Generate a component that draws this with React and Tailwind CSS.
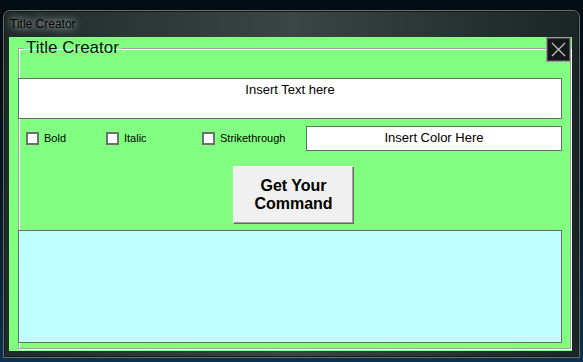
import React from 'react';

const Check = ({ label, className = '' }) => (
  <label className={`flex items-center gap-[5px] ${className}`}>
    <span className="w-[13px] h-[13px] border-2 border-[#6e6e6e] bg-white shrink-0" />
    <span className="text-[11px] leading-none text-black">{label}</span>
  </label>
);

const App = () => {
  return (
    <div className="w-[583px] h-[362px] overflow-hidden bg-gradient-to-b from-[#040c14] via-[#071522] to-[#0d3050] pt-[10px] font-['Liberation_Sans',Arial,sans-serif]">
      {/* window */}
      <div className="ml-[3px] w-[577px] rounded-t-[7px] border border-[#66706f] bg-gradient-to-r from-[#202a2a] via-[#3a4544] to-[#1c2525] px-[5px] pb-[6px] shadow-[inset_0_0_0_1px_#141a1a]">
        <div className="h-[26px] flex items-center pl-[1px]">
          <span className="text-[12px] text-black [text-shadow:0_0_6px_rgba(220,235,230,0.9),0_0_12px_rgba(220,235,230,0.6)]">Title Creator</span>
        </div>

        {/* client area */}
        <div className="relative h-[314px] w-[563px] bg-[#80ff80] pl-[9px] pr-[1px] pt-[2px] pb-[2px]">
          <fieldset className="h-[310px] border border-[#a0a0a0] shadow-[inset_1px_1px_0_#fff,1px_1px_0_#fff]">
            <legend className="ml-[5px] px-[2px] text-[17px] leading-[18px] text-[#111]">Title Creator</legend>

            <div className="-ml-[1px] mr-[8px] flex flex-col">
              <div className="mt-[21px] h-[41px] border border-[#6a6a6a] bg-white text-center text-[13px] text-black pt-[1px]">
                Insert Text here
              </div>

              <div className="mt-[7px] h-[25px] flex items-center">
                <Check label="Bold" className="ml-[8px] w-[80px]" />
                <Check label="Italic" className="w-[96px]" />
                <Check label="Strikethrough" className="w-[104px]" />
                <div className="flex-1 h-[25px] border border-[#6a6a6a] bg-white text-center text-[13px] leading-[21px] text-black">
                  Insert Color Here
                </div>
              </div>

              <div className="mt-[15px] flex justify-center pl-[7px]">
                <button className="w-[121px] h-[58px] bg-[#f0f0f0] border border-t-white border-l-white border-b-[#696969] border-r-[#696969] shadow-[inset_-1px_-1px_0_#a0a0a0] text-[16px] leading-[18px] font-bold text-black">
                  Get Your
                  <br />
                  Command
                </button>
              </div>

              <div className="mt-[6px] h-[113px] border border-[#6a6a6a] bg-[#c0ffff]" />
            </div>
          </fieldset>

          {/* close button */}
          <button className="absolute top-0 right-[1px] w-[25px] h-[25px] bg-[#151818] border border-[#9a9a9a] shadow-[inset_0_0_0_1px_#454a4a] flex items-center justify-center">
            <svg width="17" height="17" viewBox="0 0 17 17">
              <path d="M2 2 L15 15 M15 2 L2 15" stroke="#b8bcbc" strokeWidth="1.4" />
            </svg>
          </button>
        </div>
      </div>
    </div>
  );
};

export default App;
